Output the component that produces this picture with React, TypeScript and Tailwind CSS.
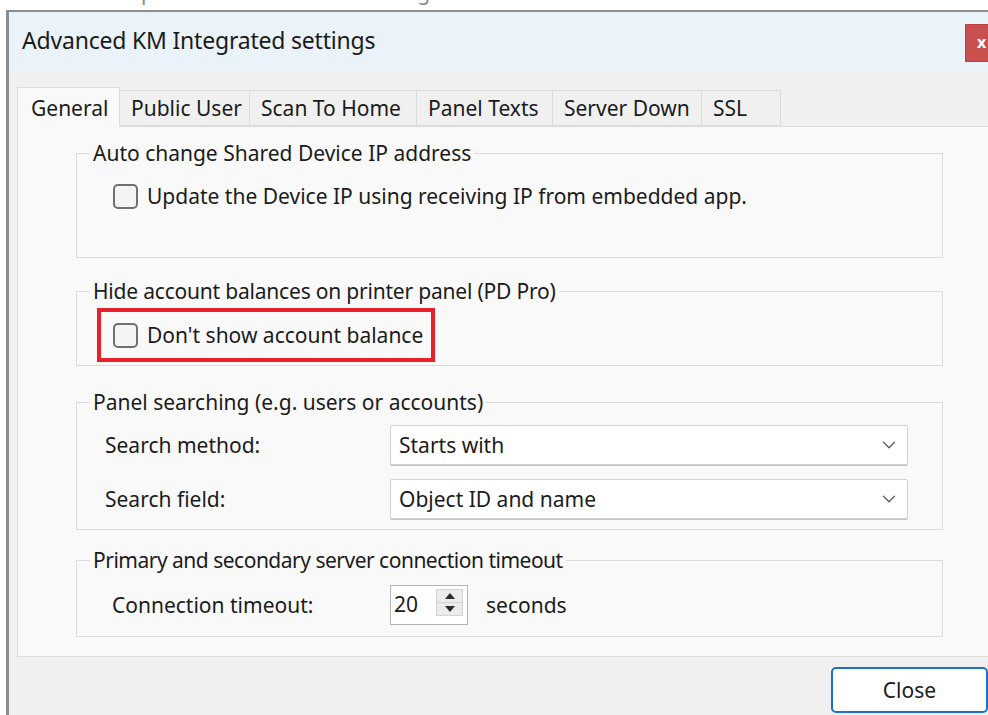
import { ChevronDown } from "lucide-react";

// tab strip: label and width of each tab
const TABS: [string, number][] = [
  ["General", 103],
  ["Public User", 130],
  ["Scan To Home", 167],
  ["Panel Texts", 136],
  ["Server Down", 149],
  ["SSL", 79],
];

const font = "font-['Noto_Sans','Open_Sans',sans-serif]";

function CheckBox() {
  return <span className="w-[25px] h-[25px] shrink-0 rounded-[5px] border-2 border-[#707070] bg-[#f4f4f4]" />;
}

function Select({ value }: { value: string }) {
  return (
    <div className="w-[518px] h-[40px] bg-white border border-[#d2d2d2] rounded-[2px] flex items-center justify-between pl-[8px] pr-[7px] shadow-[0_1px_0_#c4c4c4]">
      <span>{value}</span>
      <ChevronDown className="w-[22px] h-[22px] text-[#5c5c5c]" strokeWidth={1.4} />
    </div>
  );
}

function Spinner({ value }: { value: number }) {
  return (
    <div className="w-[78px] h-[40px] bg-white border border-[#b4b4b4] flex items-start">
      <span className="flex-1 pl-[3px] pt-[5px] leading-[26px]">{value}</span>
      <div className="w-[27px] h-[27px] mt-[3px] mr-[4px] bg-[#ececec] border border-[#d4d4d4] flex flex-col">
        <div className="flex-1 flex items-center justify-center border-b border-[#d4d4d4]">
          <svg width="10" height="6" viewBox="0 0 10 6"><path d="M5 0 L10 6 L0 6 Z" fill="#2b2b2b" /></svg>
        </div>
        <div className="flex-1 flex items-center justify-center">
          <svg width="10" height="6" viewBox="0 0 10 6"><path d="M0 0 L10 0 L5 6 Z" fill="#2b2b2b" /></svg>
        </div>
      </div>
    </div>
  );
}

export default function App() {
  return (
    <div className={`w-[988px] h-[715px] bg-white overflow-hidden flex flex-col text-[21px] leading-[26px] text-[#1b1b1b] ${font}`}>
      {/* tail of the line above the window */}
      <div className="h-[10px] overflow-hidden">
        <p className="mt-[-20px] ml-[20px] leading-[24px] text-[#8a8a8a]">Locate the option in the Advanced settings and enable it.</p>
      </div>

      <div className="flex-1 ml-[6px] border-l-[3px] border-t-2 border-[#8c8c8c] flex flex-col min-h-0">
        {/* title bar */}
        <div className="h-[59px] bg-[#eaf3f9] flex items-center justify-between pl-[13px]">
          <span className="text-[23px] tracking-[-0.2px] mt-[-3px]">Advanced KM Integrated settings</span>
          <div className="w-[32px] h-[38px] mt-[3px] bg-[#c9504f] border border-[#b94342] text-white text-[16px] leading-[24px] font-bold pl-[11px] pt-[5px] mr-[-9px]">x</div>
        </div>

        <div className="flex-1 bg-[#f0f0f0] pl-[8px] flex flex-col">
          {/* tabs */}
          <div className="flex items-end mt-[16px] h-[39px]">
            {TABS.map(([t, w], i) =>
              i === 0 ? (
                <div key={t} style={{ width: w }} className="h-[40px] pl-[13px] bg-[#f9f9f9] border border-b-0 border-[#dcdcdc] flex items-center mb-[-1px] relative z-10">
                  {t}
                </div>
              ) : (
                <div key={t} style={{ width: w }} className="h-[36px] pl-[11px] bg-[#f0f0f0] border border-l-0 border-[#dcdcdc] flex items-center">
                  {t}
                </div>
              )
            )}
          </div>

          {/* General tab page */}
          <div className="h-[531px] mr-[-10px] bg-[#f9f9f9] border border-[#dcdcdc] pl-[58px] pt-[13px] flex flex-col">
            <fieldset className="w-[867px] h-[118px] border border-[#dcdcdc]">
              <legend className="ml-[13px] px-[3px]">Auto change Shared Device IP address</legend>
              <label className="flex items-center gap-[9px] mt-[17px] ml-[36px]">
                <CheckBox />
                Update the Device IP using receiving IP from embedded app.
              </label>
            </fieldset>

            <fieldset className="w-[867px] h-[88px] mt-[20px] border border-[#dcdcdc]">
              <legend className="ml-[13px] px-[3px] tracking-[-0.2px]">Hide account balances on printer panel (PD Pro)</legend>
              <div className="w-[338px] h-[54px] mt-[4px] ml-[20px] border-[4px] border-[#e8202a] flex items-center pl-[12px]">
                <label className="flex items-center gap-[9px]">
                  <CheckBox />
                  Don't show account balance
                </label>
              </div>
            </fieldset>

            <fieldset className="w-[867px] h-[141px] mt-[23px] border border-[#dcdcdc]">
              <legend className="ml-[13px] px-[3px]">Panel searching (e.g. users or accounts)</legend>
              <div className="flex items-center mt-[10px] ml-[28px]">
                <span className="w-[285px]">Search method:</span>
                <Select value="Starts with" />
              </div>
              <div className="flex items-center mt-[14px] ml-[28px]">
                <span className="w-[285px]">Search field:</span>
                <Select value="Object ID and name" />
              </div>
            </fieldset>

            <fieldset className="w-[867px] h-[90px] mt-[17px] border border-[#dcdcdc]">
              <legend className="ml-[13px] px-[3px] tracking-[-0.5px]">Primary and secondary server connection timeout</legend>
              <div className="flex items-center mt-[12px] ml-[35px]">
                <span className="w-[278px]">Connection timeout:</span>
                <Spinner value={20} />
                <span className="ml-[18px]">seconds</span>
              </div>
            </fieldset>
          </div>

          {/* dialog buttons */}
          <div className="flex justify-end mt-[10px]">
            <button className="w-[157px] h-[46px] bg-white border-2 border-[#1a73c8] rounded-[5px]">Close</button>
          </div>
        </div>
      </div>
    </div>
  );
}
